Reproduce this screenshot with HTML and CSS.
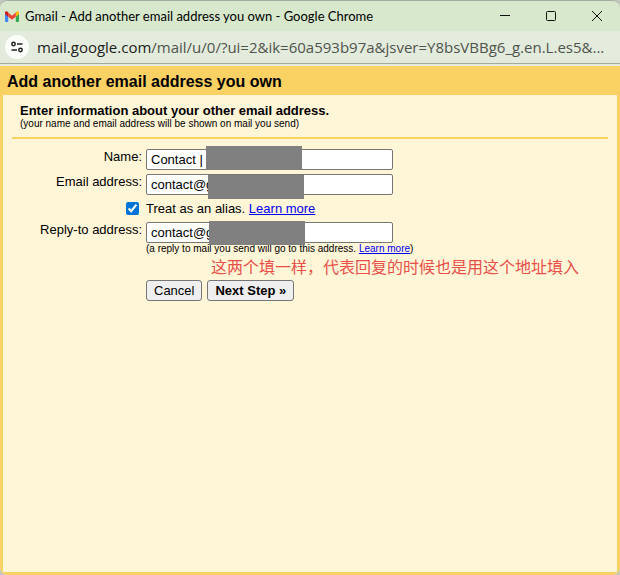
FILE: index.html
```html
<!DOCTYPE html>
<html lang="en">
<head>
<meta charset="utf-8">
<meta name="viewport" content="width=device-width">
<title>Gmail - Add another email address you own</title>
<link rel="stylesheet" href="styles.css">
</head>
<body>
<div class="window">
  <header class="titlebar">
    <svg class="gmail" viewBox="0 0 14 11" aria-hidden="true">
      <path fill="#4285f4" d="M0 2v8a1 1 0 0 0 1 1h2.200V4.500z"/>
      <path fill="#34a853" d="M14 2v8a1 1 0 0 1-1 1h-2.200V4.500z"/>
      <path fill="#c5221f" d="M0 1.500v1.800l3.200 2.500V1.500L2.300.6C1.300-.3 0 .4 0 1.500z"/>
      <path fill="#fbbc04" d="M14 1.500v1.800l-3.200 2.500V1.500l.9-.9C12.700-.3 14 .4 14 1.500z"/>
      <path fill="#ea4335" d="M3.200 1.500v4.300L7 8.800l3.800-3V1.500L7 4.700z"/>
    </svg>
    <span class="caption">Gmail - Add another email address you own - Google Chrome</span>
    <div class="controls">
      <button type="button" aria-label="Minimize"><svg viewBox="0 0 12 12"><path d="M1 5.500h10"/></svg></button>
      <button type="button" aria-label="Maximize"><svg viewBox="0 0 12 12"><rect x="1.500" y="1.500" width="9" height="9" rx="1"/></svg></button>
      <button type="button" aria-label="Close"><svg viewBox="0 0 12 12"><path d="M1 1l10 10M11 1L1 11"/></svg></button>
    </div>
  </header>
  <div class="addressbar">
    <button type="button" class="site" aria-label="View site information">
      <svg viewBox="0 0 12 12"><circle cx="2.500" cy="3" r="1.700"/><path d="M6 3h5.500M.5 9H6"/><circle cx="9.500" cy="9" r="1.700"/></svg>
    </button>
    <span class="url"><b>mail.google.com</b>/mail/u/0/?ui=2&amp;ik=60a593b97a&amp;jsver=Y8bsVBBg6_g.en.L.es5&amp;...</span>
  </div>
  <main class="page">
    <h1>Add another email address you own</h1>
    <form class="panel">
      <div class="intro">
        <h2>Enter information about your other email address.</h2>
        <p class="small">(your name and email address will be shown on mail you send)</p>
      </div>
      <div class="fields">
        <label class="label" for="name">Name:</label>
        <div class="field"><input type="text" id="name" value="Contact |"><span class="mask mask-name"></span></div>
        <label class="label" for="email">Email address:</label>
        <div class="field"><input type="text" id="email" value="contact@g"><span class="mask mask-email"></span></div>
        <input type="checkbox" class="tick" id="alias" checked>
        <div class="alias"><label for="alias">Treat as an alias.</label> <a href="#">Learn more</a></div>
        <label class="label" for="reply">Reply-to address:</label>
        <div class="field">
          <input type="text" id="reply" value="contact@g"><span class="mask mask-reply"></span>
          <p class="small">(a reply to mail you send will go to this address. <a href="#">Learn more</a>)</p>
          <p class="note" lang="zh-CN">这两个填一样，代表回复的时候也是用这个地址填入</p>
        </div>
        <div class="actions">
          <button type="button">Cancel</button>
          <button type="submit" class="next">Next Step »</button>
        </div>
      </div>
    </form>
  </main>
</div>
</body>
</html>
```
FILE: styles.css
```css
* { box-sizing: border-box; }

body {
  margin: 0;
  background: #c4c6c0;
  color: #000;
  font: 13px/16px "Liberation Sans", Arial, sans-serif;
}

h1, h2, p { margin: 0; }

.window {
  display: flex;
  flex-direction: column;
  min-height: 100vh;
  border-top: 1px solid #a5aca0;
  border-radius: 8px;
  overflow: hidden;
  background: #e3ebdc;
}

.titlebar {
  display: flex;
  align-items: center;
  height: 30px;
  padding-left: 5px;
  background: #d7e8cd;
}

.gmail { width: 14px; height: 11px; }

.caption {
  flex: 1;
  margin-left: 6px;
  font: 13px/16px Lato, sans-serif;
  white-space: nowrap;
}

.controls { display: flex; }

.controls button {
  display: flex;
  justify-content: center;
  width: 46px;
  padding: 0;
  border: 0;
  background: none;
}

.controls svg { width: 12px; height: 12px; fill: none; stroke: #111; }

.addressbar {
  display: flex;
  align-items: center;
  height: 33px;
  padding: 0 5px;
  border-bottom: 1px solid #a3aaa0;
}

.site {
  display: flex;
  align-items: center;
  justify-content: center;
  flex: none;
  width: 24px;
  height: 24px;
  padding: 0;
  border: 0;
  border-radius: 50%;
  background: #fbfdf9;
}

.site svg { width: 12px; height: 12px; fill: none; stroke: #222; stroke-width: 1.500; }

.url {
  margin-left: 8px;
  overflow: hidden;
  color: #50544e;
  font: 15px/24px "Open Sans", sans-serif;
  white-space: nowrap;
}

.url b { color: #1c211b; font-weight: 400; }

.page {
  display: flex;
  flex: 1;
  flex-direction: column;
  margin-top: 2px;
  padding: 0 3px 3px;
  background: #fad163;
}

h1 { padding: 7px 4px 4px; font-size: 16px; line-height: 18px; }

.panel { flex: 1; padding: 8px 9px; background: #fff5d7; }

.intro { padding: 0 8px 8px; border-bottom: 2px solid #fad163; }

h2 { font-size: 13px; line-height: 15px; }

.small { font-size: 10px; line-height: 11px; }

.fields {
  display: grid;
  grid-template-columns: 130px 1fr;
  column-gap: 4px;
  row-gap: 4px;
  padding-top: 10px;
}

.label { text-align: right; }

.field { position: relative; }

.field input {
  display: block;
  width: 247px;
  height: 21px;
  padding: 1px 4px;
  border: 1px solid #767676;
  border-radius: 2px;
  background: #fff;
  font: inherit;
}

.mask {
  position: absolute;
  width: 96px;
  height: 24px;
  background: #808080;
}

.mask-name { top: -3px; left: 60px; }
.mask-email { top: 1px; left: 62px; }
.mask-reply { top: -1px; left: 63px; }

.tick {
  justify-self: end;
  width: 13px;
  height: 13px;
  margin: 3px 3px 0 0;
  accent-color: #0075d7;
}

.alias { padding: 2px 0 1px; }

a { color: #00e; }

.note {
  margin-left: 65px;
  padding-top: 2px;
  color: #e8504a;
  font: 16px/20px "Noto Sans CJK SC", sans-serif;
  white-space: nowrap;
}

.actions { display: flex; grid-column: 2; gap: 5px; }

.actions button {
  height: 21px;
  padding: 0 7px;
  border: 1px solid #767676;
  border-radius: 3px;
  background: #efefef;
  color: #000;
  font: inherit;
}

.actions .next { font-weight: 700; }
```
